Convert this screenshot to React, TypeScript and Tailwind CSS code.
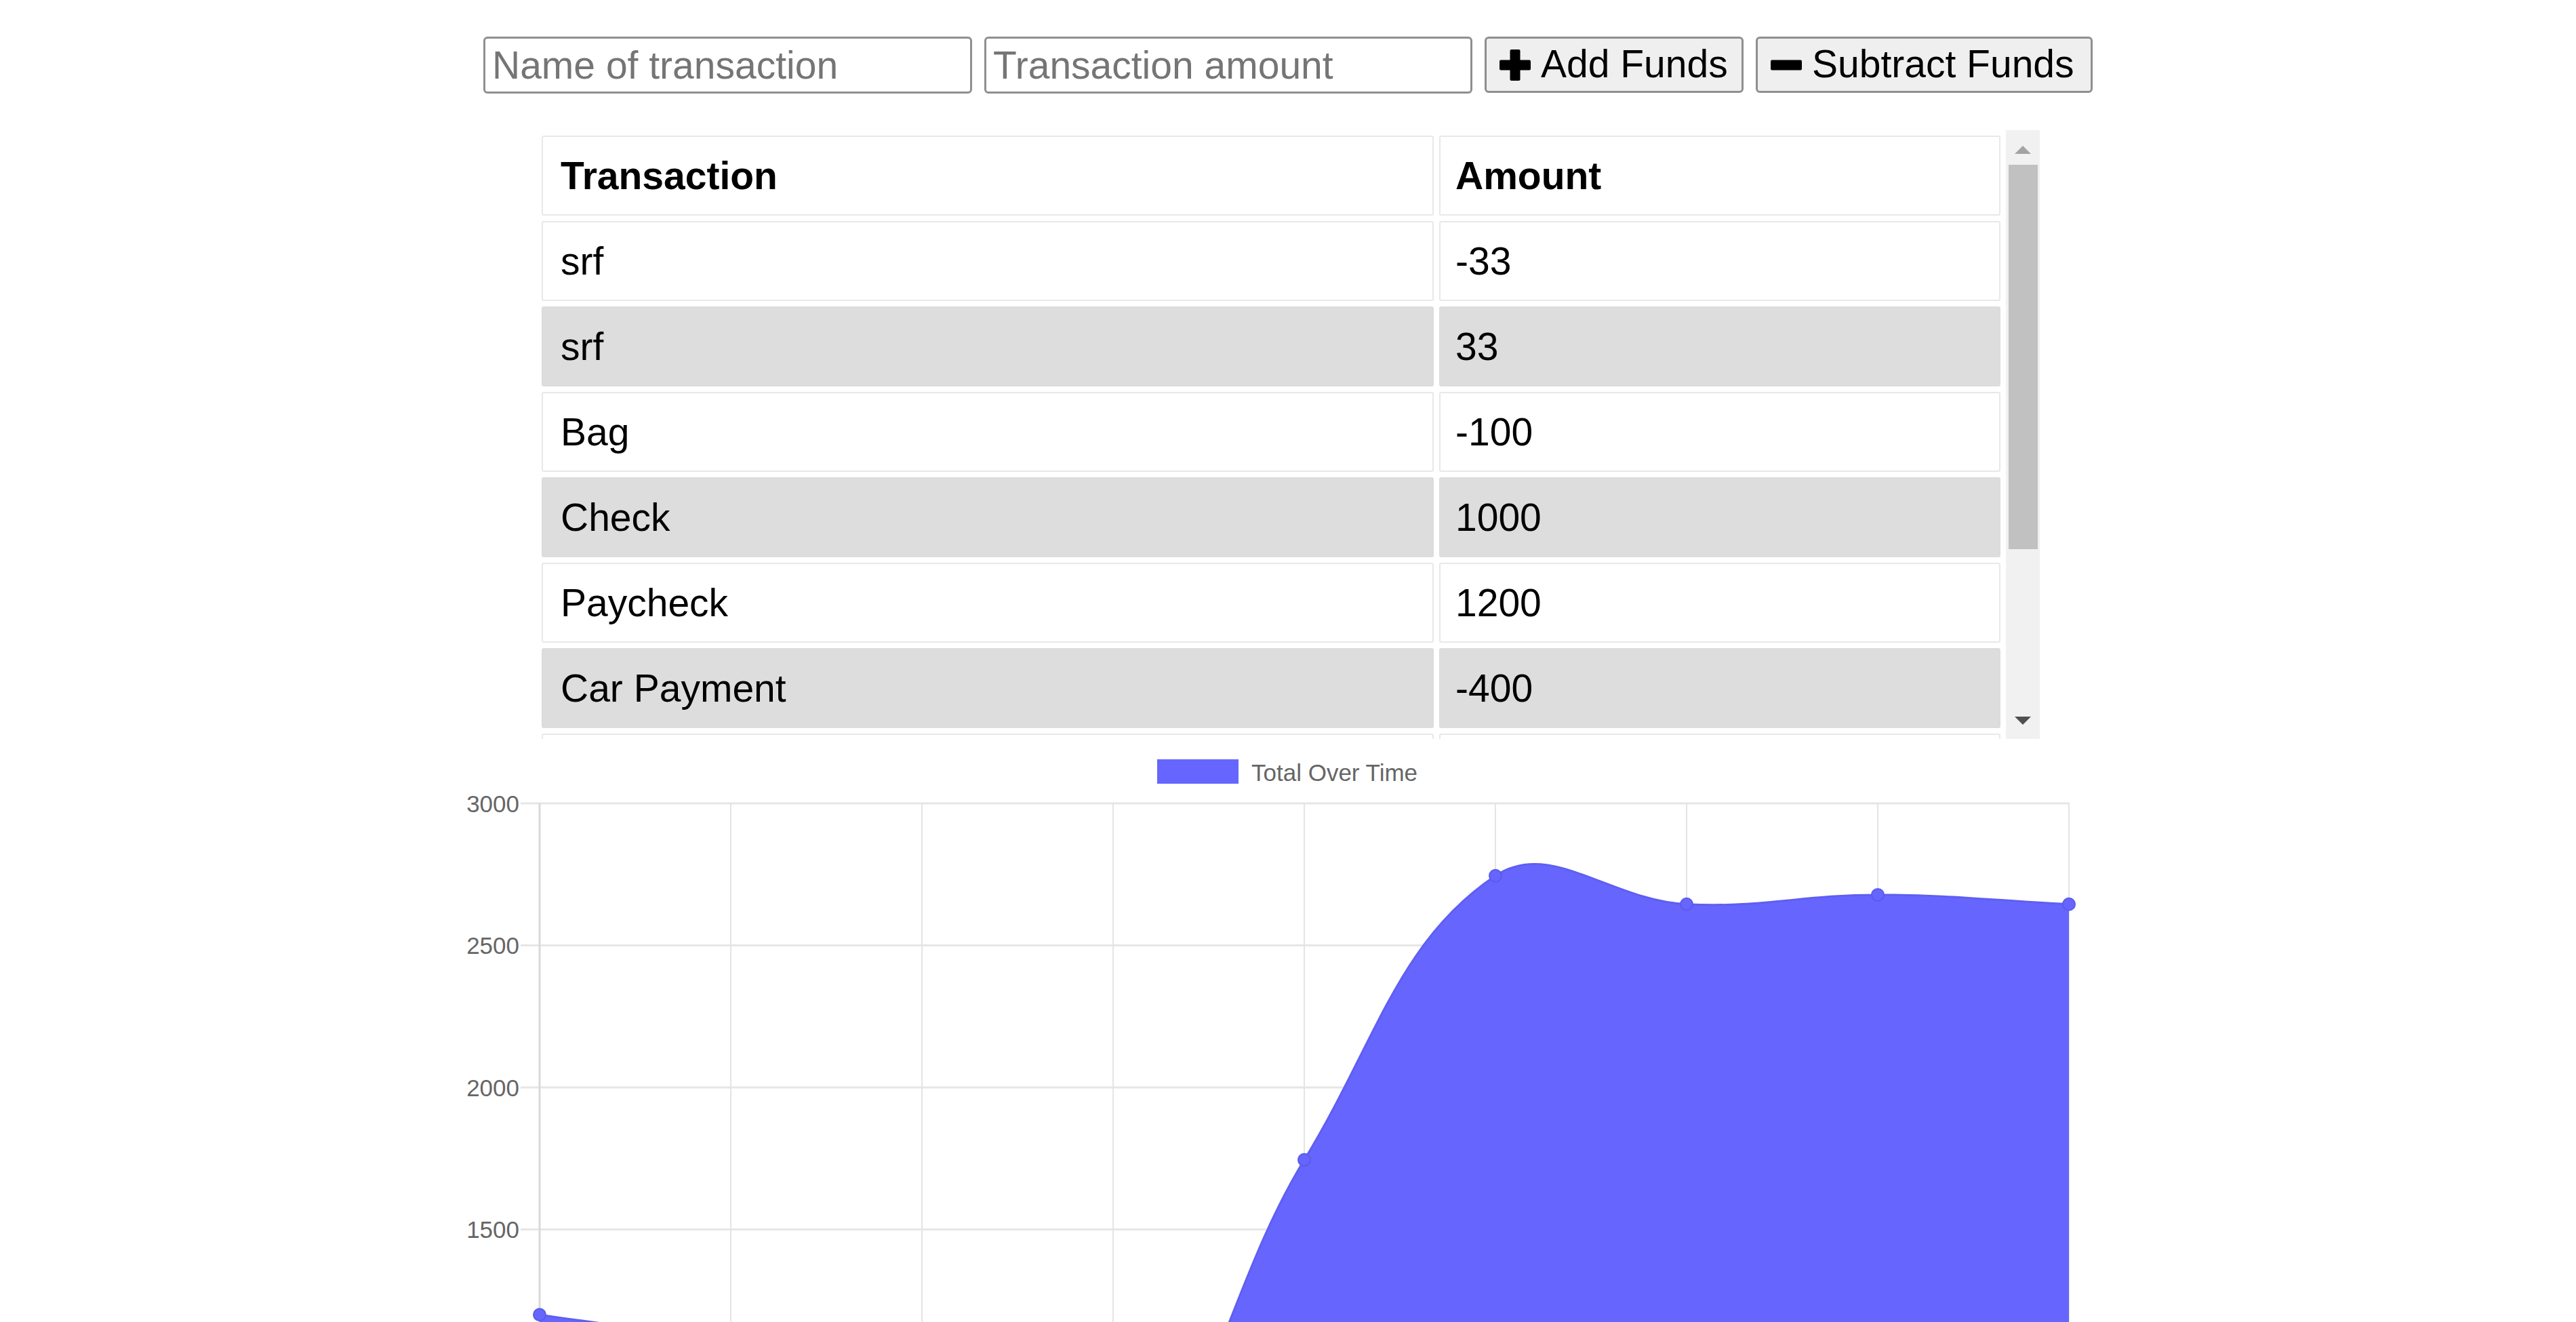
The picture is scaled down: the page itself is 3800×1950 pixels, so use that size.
import React from "react";

type Row = { name: string; amount: number };

const rows: Row[] = [
  { name: "srf", amount: -33 },
  { name: "srf", amount: 33 },
  { name: "Bag", amount: -100 },
  { name: "Check", amount: 1000 },
  { name: "Paycheck", amount: 1200 },
  { name: "Car Payment", amount: -400 },
  { name: "Groceries", amount: -155 },
  { name: "Gas", amount: -100 },
  { name: "Deposit", amount: 1200 },
];

const vals = [1200, 1100, 945, 545, 1745, 2745, 2645, 2678, 2645];
const X0 = 136;
const DX = 282;
const TOP = 95;
const K = 0.419;
const yOf = (v: number) => TOP + (3000 - v) * K;

type P = { x: number; y: number };

function buildPath(): { line: string; fill: string; pts: P[] } {
  const pts: P[] = vals.map((v, i) => ({ x: X0 + DX * i, y: yOf(v) }));
  const t = 0.4;
  const ctrl = pts.map((mid, i) => {
    const prev = i > 0 ? pts[i - 1] : pts[0];
    const next = i < pts.length - 1 ? pts[i + 1] : pts[pts.length - 1];
    const d01 = Math.hypot(mid.x - prev.x, mid.y - prev.y);
    const d12 = Math.hypot(next.x - mid.x, next.y - mid.y);
    let s01 = d01 / (d01 + d12);
    let s12 = d12 / (d01 + d12);
    if (isNaN(s01)) s01 = 0;
    if (isNaN(s12)) s12 = 0;
    const fa = t * s01;
    const fb = t * s12;
    return {
      prev: { x: mid.x - fa * (next.x - prev.x), y: Math.max(TOP, mid.y - fa * (next.y - prev.y)) },
      next: { x: mid.x + fb * (next.x - prev.x), y: Math.max(TOP, mid.y + fb * (next.y - prev.y)) },
    };
  });
  let d = `M ${pts[0].x} ${pts[0].y}`;
  for (let i = 1; i < pts.length; i++) {
    const c1 = ctrl[i - 1].next;
    const c2 = ctrl[i].prev;
    d += ` C ${c1.x} ${c1.y} ${c2.x} ${c2.y} ${pts[i].x} ${pts[i].y}`;
  }
  const last = pts[pts.length - 1];
  const bottom = yOf(0);
  const fill = `${d} L ${last.x} ${bottom} L ${pts[0].x} ${bottom} Z`;
  return { line: d, fill, pts };
}

function Chart() {
  const { line, fill, pts } = buildPath();
  const hLines = [3000, 2500, 2000, 1500, 1000];
  const vLines = [1, 2, 3, 4, 5, 6, 7, 8];
  return (
    <svg width="2480" height="860" viewBox="0 0 2480 860" className="block mx-auto overflow-hidden">
      <rect x="1047" y="30" width="120" height="36" fill="#6666ff" />
      <text
        x="1186"
        y="49"
        dominantBaseline="central"
        fontFamily="'Liberation Sans', Arial, sans-serif"
        fontSize="35"
        fill="#666666"
      >
        Total Over Time
      </text>
      {hLines.map((v) => (
        <g key={v}>
          <line x1="108" x2="2393" y1={yOf(v)} y2={yOf(v)} stroke="#e6e6e6" strokeWidth="3" />
          <text
            x="106"
            y={yOf(v)}
            textAnchor="end"
            dominantBaseline="central"
            fontFamily="'Liberation Sans', Arial, sans-serif"
            fontSize="35"
            fill="#666666"
          >
            {v}
          </text>
        </g>
      ))}
      {vLines.map((i) => (
        <line key={i} x1={X0 + DX * i} x2={X0 + DX * i} y1={TOP} y2="860" stroke="#e4e4e4" strokeWidth="2" />
      ))}
      <line x1={X0} x2={X0} y1={TOP} y2="860" stroke="#d9d9d9" strokeWidth="3" />
      <path d={fill} fill="#6666ff" />
      <path d={line} fill="none" stroke="#5f5ff2" strokeWidth="3" />
      {pts.map((p, i) => (
        <circle key={i} cx={p.x} cy={p.y} r="9" fill="#6666ff" stroke="#5a5aee" strokeWidth="2" />
      ))}
    </svg>
  );
}

function PlusIcon() {
  return (
    <svg width="46" height="46" viewBox="0 0 46 46" className="shrink-0">
      <rect x="15.5" y="0" width="15" height="46" rx="2" fill="#000" />
      <rect x="0" y="15.5" width="46" height="15" rx="2" fill="#000" />
    </svg>
  );
}

function MinusIcon() {
  return (
    <svg width="46" height="46" viewBox="0 0 46 46" className="shrink-0">
      <rect x="0" y="15.5" width="46" height="15" rx="2" fill="#000" />
    </svg>
  );
}

export default function App() {
  return (
    <div className="h-screen w-full overflow-hidden bg-white font-['Liberation_Sans',Arial,sans-serif] text-black">
      <div className="flex justify-center items-start gap-[18px] pt-[54px]">
        <input
          type="text"
          placeholder="Name of transaction"
          className="w-[721px] h-[84px] px-[10px] border-[3px] border-[#8f8f8f] rounded-[6px] text-[57px] leading-none text-black placeholder:text-[#757575] outline-none font-['Liberation_Sans',Arial,sans-serif]"
        />
        <input
          type="text"
          placeholder="Transaction amount"
          className="w-[720px] h-[84px] px-[10px] border-[3px] border-[#8f8f8f] rounded-[6px] text-[57px] leading-none text-black placeholder:text-[#757575] outline-none font-['Liberation_Sans',Arial,sans-serif]"
        />
        <button className="w-[382px] h-[83px] flex items-center gap-[15px] px-[19px] pb-[3px] border-[3px] border-[#8f8f8f] rounded-[6px] bg-[#efefef] text-[57px] leading-none whitespace-nowrap font-['Liberation_Sans',Arial,sans-serif]">
          <span className="pt-[3px] flex"><PlusIcon /></span>
          <span>Add Funds</span>
        </button>
        <button className="w-[497px] h-[83px] flex items-center gap-[15px] px-[19px] pb-[3px] border-[3px] border-[#8f8f8f] rounded-[6px] bg-[#efefef] text-[57px] leading-none whitespace-nowrap font-['Liberation_Sans',Arial,sans-serif]">
          <span className="pt-[3px] flex"><MinusIcon /></span>
          <span>Subtract Funds</span>
        </button>
      </div>

      <div className="mx-auto mt-[54px] w-[2218px] h-[898px] flex">
        <div className="flex-1 overflow-hidden">
          <table className="w-full table-fixed border-separate border-spacing-[8px] text-[57px] leading-none">
            <colgroup>
              <col className="w-[1316px]" />
              <col />
            </colgroup>
            <thead>
              <tr>
                <th className="h-[118px] border-2 border-[#e8e8e8] rounded-[3px] pl-[26px] text-left font-bold align-middle">
                  Transaction
                </th>
                <th className="h-[118px] border-2 border-[#e8e8e8] rounded-[3px] pl-[22px] text-left font-bold align-middle">
                  Amount
                </th>
              </tr>
            </thead>
            <tbody>
              {rows.map((r, i) =>
                i % 2 === 1 ? (
                  <tr key={i}>
                    <td className="h-[118px] border-2 border-[#dcdcdc] bg-[#dddddd] rounded-[3px] pl-[26px] align-middle">
                      {r.name}
                    </td>
                    <td className="h-[118px] border-2 border-[#dcdcdc] bg-[#dddddd] rounded-[3px] pl-[22px] align-middle">
                      {r.amount}
                    </td>
                  </tr>
                ) : (
                  <tr key={i}>
                    <td className="h-[118px] border-2 border-[#e8e8e8] bg-white rounded-[3px] pl-[26px] align-middle">
                      {r.name}
                    </td>
                    <td className="h-[118px] border-2 border-[#e8e8e8] bg-white rounded-[3px] pl-[22px] align-middle">
                      {r.amount}
                    </td>
                  </tr>
                )
              )}
            </tbody>
          </table>
        </div>
        <div className="w-[50px] h-full bg-[#f1f1f1] flex flex-col">
          <div className="h-[51px] flex items-center justify-center pt-[6px]">
            <svg width="24" height="12" viewBox="0 0 24 12">
              <polygon points="0,12 24,12 12,0" fill="#a3a3a3" />
            </svg>
          </div>
          <div className="flex-1 px-[3px] pl-[4px]">
            <div className="h-[567px] bg-[#c1c1c1]" />
          </div>
          <div className="h-[51px] flex items-center justify-center pb-[4px]">
            <svg width="24" height="12" viewBox="0 0 24 12">
              <polygon points="0,0 24,0 12,12" fill="#505050" />
            </svg>
          </div>
        </div>
      </div>

      <Chart />
    </div>
  );
}
